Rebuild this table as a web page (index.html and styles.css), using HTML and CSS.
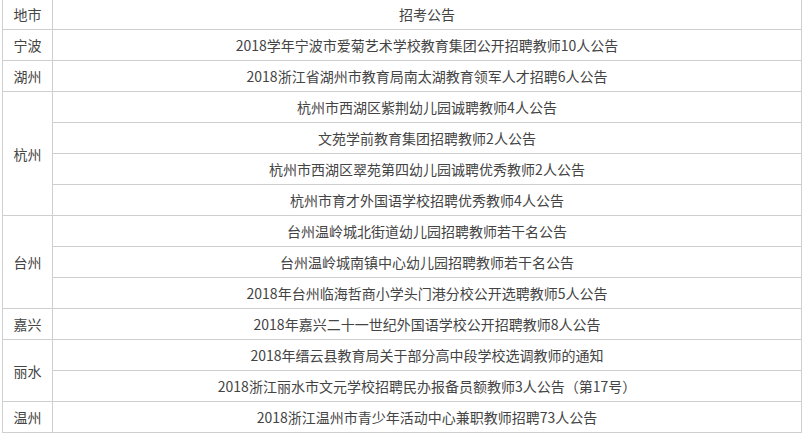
FILE: index.html
```html
<!DOCTYPE html>
<html lang="zh-CN">
<head>
<meta charset="utf-8">
<title>招考公告</title>
<link rel="stylesheet" href="styles.css">
</head>
<body>
<table class="notice-table">
  <colgroup><col class="col-city"><col class="col-title"></colgroup>
  <tr><td>地市</td><td>招考公告</td></tr>
  <tr><td>宁波</td><td>2018学年宁波市爱菊艺术学校教育集团公开招聘教师10人公告</td></tr>
  <tr><td>湖州</td><td>2018浙江省湖州市教育局南太湖教育领军人才招聘6人公告</td></tr>
  <tr><td rowspan="4">杭州</td><td>杭州市西湖区紫荆幼儿园诚聘教师4人公告</td></tr>
  <tr><td>文苑学前教育集团招聘教师2人公告</td></tr>
  <tr><td>杭州市西湖区翠苑第四幼儿园诚聘优秀教师2人公告</td></tr>
  <tr><td>杭州市育才外国语学校招聘优秀教师4人公告</td></tr>
  <tr><td rowspan="3">台州</td><td>台州温岭城北街道幼儿园招聘教师若干名公告</td></tr>
  <tr><td>台州温岭城南镇中心幼儿园招聘教师若干名公告</td></tr>
  <tr><td>2018年台州临海哲商小学头门港分校公开选聘教师5人公告</td></tr>
  <tr><td>嘉兴</td><td>2018年嘉兴二十一世纪外国语学校公开招聘教师8人公告</td></tr>
  <tr><td rowspan="2">丽水</td><td>2018年缙云县教育局关于部分高中段学校选调教师的通知</td></tr>
  <tr><td>2018浙江丽水市文元学校招聘民办报备员额教师3人公告（第17号）</td></tr>
  <tr><td>温州</td><td>2018浙江温州市青少年活动中心兼职教师招聘73人公告</td></tr>
</table>
</body>
</html>
```

FILE: styles.css
```css
html, body {
  margin: 0;
  padding: 0;
  background: #fff;
}
body {
  font-family: "Noto Sans CJK SC", "Microsoft YaHei", sans-serif;
  font-size: 14px;
  color: #444;
}
.notice-table {
  border-collapse: collapse;
  width: 800px;
  margin: -2px 0 0 2px;
  table-layout: fixed;
}
.col-city { width: 50px; }
.notice-table td {
  border: 1px solid #cfcfcf;
  height: 30px;
  padding: 0;
  text-align: center;
  vertical-align: middle;
  line-height: 20px;
  white-space: nowrap;
}
```
